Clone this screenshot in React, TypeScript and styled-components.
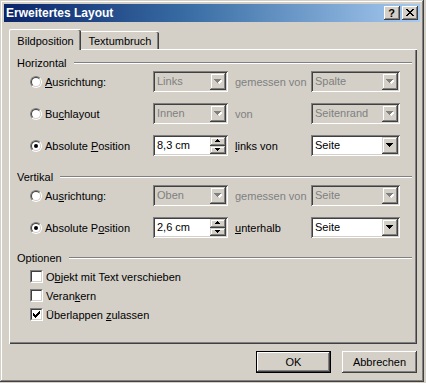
import React from "react";
import styled, { createGlobalStyle } from "styled-components";

const FACE = "#D4D0C8";
const SHADOW = "#808080";
const DARK = "#404040";
const HI = "#FFFFFF";

const GlobalStyle = createGlobalStyle`
  html, body { margin: 0; padding: 0; background: ${FACE}; }
  body {
    font-family: "Liberation Sans", Arial, sans-serif;
    font-size: 11px;
    color: #000;
  }
  * { box-sizing: border-box; }
`;

const Window = styled.div`
  width: 424px;
  height: 382px;
  background: ${FACE};
  padding: 4px;
  box-shadow: inset -1px -1px ${DARK}, inset 1px 1px ${FACE},
    inset -2px -2px ${SHADOW}, inset 2px 2px ${HI};
  display: flex;
  flex-direction: column;
`;

const TitleBar = styled.div`
  height: 18px;
  flex: none;
  display: flex;
  align-items: center;
  justify-content: space-between;
  padding: 0 2px 0 2px;
  background: linear-gradient(to right, #0a246a 0%, #3a6ea5 45%, #a6caf0 100%);
`;

const TitleText = styled.span`
  color: #fff;
  font-weight: bold;
  font-size: 12px;
  line-height: 18px;
`;

const CaptionButtons = styled.div`
  display: flex;
  gap: 2px;
`;

const CaptionButton = styled.div`
  width: 16px;
  height: 14px;
  background: ${FACE};
  box-shadow: inset -1px -1px ${DARK}, inset 1px 1px ${HI},
    inset -2px -2px ${SHADOW};
  display: flex;
  align-items: center;
  justify-content: center;
  font-weight: bold;
  font-size: 11px;
  line-height: 14px;
  padding: 0 1px 1px 0;
`;

const Body = styled.div`
  flex: 1;
  display: flex;
  flex-direction: column;
  padding: 7px 3px 0 5px;
`;

const TabStrip = styled.div`
  display: flex;
  align-items: flex-start;
  height: 20px;
  position: relative;
  z-index: 1;
`;

const Tab = styled.div<{ $active?: boolean }>`
  height: ${(p) => (p.$active ? 21 : 18)}px;
  margin-top: ${(p) => (p.$active ? 0 : 2)}px;
  width: ${(p) => (p.$active ? 72 : 78)}px;
  background: ${FACE};
  border-top: 1px solid ${HI};
  border-left: ${(p) => (p.$active ? `1px solid ${HI}` : "none")};
  border-top-left-radius: ${(p) => (p.$active ? 2 : 0)}px;
  border-top-right-radius: 2px;
  box-shadow: inset -1px 0 ${DARK}, inset -2px 0 ${SHADOW};
  padding-top: ${(p) => (p.$active ? 5 : 3)}px;
  text-align: center;
  line-height: 13px;
`;

const Panel = styled.div`
  width: 408px;
  height: 295px;
  border-top: 1px solid ${HI};
  border-left: 1px solid ${HI};
  box-shadow: inset -1px -1px ${DARK}, inset -2px -2px ${SHADOW};
  padding: 6px 5px 0 7px;
  display: flex;
  flex-direction: column;
`;

const GroupHeader = styled.div<{ $gap?: number }>`
  display: flex;
  align-items: center;
  gap: 7px;
  height: 14px;
  margin-top: ${(p) => p.$gap ?? 0}px;
`;

const GroupLine = styled.div`
  flex: 1;
  height: 2px;
  border-top: 1px solid ${SHADOW};
  border-bottom: 1px solid ${HI};
`;

const Rows = styled.div`
  display: flex;
  flex-direction: column;
  gap: 11px;
  margin-top: 1px;
  padding-left: 13px;
`;

const Row = styled.div`
  display: grid;
  grid-template-columns: 123px 75px 83px 89px;
  height: 21px;
  align-items: center;
`;

const OptionLabel = styled.label`
  display: flex;
  align-items: center;
  gap: 3px;
  white-space: nowrap;
`;

const RadioOuter = styled.span`
  width: 12px;
  height: 12px;
  border-radius: 50%;
  border: 1px solid;
  border-color: ${SHADOW} ${HI} ${HI} ${SHADOW};
  display: flex;
`;

const RadioInner = styled.span`
  flex: 1;
  border-radius: 50%;
  border: 1px solid;
  border-color: ${DARK} ${FACE} ${FACE} ${DARK};
  background: #fff;
  display: flex;
  align-items: center;
  justify-content: center;
`;

const RadioDot = styled.span`
  width: 4px;
  height: 4px;
  border-radius: 50%;
  background: #000;
`;

const Caption = styled.span<{ $disabled?: boolean }>`
  color: ${(p) => (p.$disabled ? SHADOW : "#000")};
  padding-left: 7px;
  white-space: nowrap;
`;

const Mn = styled.span`
  text-decoration: underline;
  text-underline-offset: 1px;
`;

const Field = styled.div<{ $disabled?: boolean }>`
  height: 21px;
  padding: 2px;
  display: flex;
  background: ${(p) => (p.$disabled ? FACE : "#fff")};
  box-shadow: inset 1px 1px ${SHADOW}, inset -1px -1px ${HI},
    inset 2px 2px ${DARK}, inset -2px -2px ${FACE};
`;

const FieldText = styled.span<{ $disabled?: boolean }>`
  flex: 1;
  padding-left: 2px;
  line-height: 17px;
  color: ${(p) => (p.$disabled ? SHADOW : "#000")};
  white-space: nowrap;
  overflow: hidden;
`;

const ArrowButton = styled.span`
  width: 16px;
  height: 17px;
  background: ${FACE};
  box-shadow: inset -1px -1px ${DARK}, inset 1px 1px ${FACE},
    inset -2px -2px ${SHADOW}, inset 2px 2px ${HI};
  display: flex;
  align-items: center;
  justify-content: center;
  padding: 0 1px 1px 0;
`;

const SpinColumn = styled.span`
  width: 16px;
  display: flex;
  flex-direction: column;
`;

const SpinButton = styled.span`
  flex: 1;
  background: ${FACE};
  box-shadow: inset -1px -1px ${DARK}, inset 1px 1px ${FACE},
    inset -2px -2px ${SHADOW}, inset 2px 2px ${HI};
  display: flex;
  align-items: center;
  justify-content: center;
  padding: 0 1px 1px 0;
`;

const Checks = styled.div`
  display: flex;
  flex-direction: column;
  margin-top: 2px;
  padding-left: 13px;
`;

const CheckRow = styled.label`
  display: flex;
  align-items: center;
  gap: 3px;
  height: 19px;
  white-space: nowrap;
`;

const CheckOuter = styled.span`
  width: 13px;
  height: 13px;
  border: 1px solid;
  border-color: ${SHADOW} ${HI} ${HI} ${SHADOW};
  display: flex;
`;

const CheckInner = styled.span`
  flex: 1;
  border: 1px solid;
  border-color: ${DARK} ${FACE} ${FACE} ${DARK};
  background: #fff;
  display: flex;
  align-items: center;
  justify-content: center;
`;

const ButtonRow = styled.div`
  display: flex;
  justify-content: flex-end;
  gap: 11px;
  margin-top: 7px;
  width: 408px;
`;

const PushButton = styled.div<{ $default?: boolean }>`
  width: 75px;
  height: 22px;
  display: flex;
  align-items: center;
  justify-content: center;
  background: ${FACE};
  border: ${(p) => (p.$default ? "1px solid #000" : "none")};
  box-shadow: inset -1px -1px ${DARK}, inset 1px 1px ${HI},
    inset -2px -2px ${SHADOW};
`;

const DownArrow = ({ disabled }: { disabled?: boolean }) => (
  <svg width="8" height="5" viewBox="0 0 8 5" shapeRendering="crispEdges">
    {disabled && <path d="M2 1h7v1h-1v1h-1v1h-1v1h-1v-1h-1v-1h-1v-1h-1z" fill="#fff" />}
    <path d="M0 0h7v1h-1v1h-1v1h-1v1h-1v-1h-1v-1h-1v-1h-1z" fill={disabled ? SHADOW : "#000"} />
  </svg>
);

const SpinArrow = ({ up }: { up?: boolean }) => (
  <svg width="5" height="3" viewBox="0 0 5 3" shapeRendering="crispEdges">
    <path
      d={up ? "M2 0h1v1h1v1h1v1h-5v-1h1v-1h1z" : "M0 0h5v1h-1v1h-1v1h-1v-1h-1v-1h-1z"}
      fill="#000"
    />
  </svg>
);

const Radio = ({ checked }: { checked?: boolean }) => (
  <RadioOuter>
    <RadioInner>{checked && <RadioDot />}</RadioInner>
  </RadioOuter>
);

const Check = ({ checked }: { checked?: boolean }) => (
  <CheckOuter>
    <CheckInner>
      {checked && (
        <svg width="7" height="7" viewBox="0 0 7 7" shapeRendering="crispEdges">
          <path
            d="M6 0h1v3h-1v1h-1v1h-1v1h-1v1h-1v-1h-1v-1h-1v-3h1v1h1v1h1v-1h1v-1h1z"
            fill="#000"
          />
        </svg>
      )}
    </CheckInner>
  </CheckOuter>
);

const Combo = ({ value, disabled }: { value: string; disabled?: boolean }) => (
  <Field $disabled={disabled}>
    <FieldText $disabled={disabled}>{value}</FieldText>
    <ArrowButton>
      <DownArrow disabled={disabled} />
    </ArrowButton>
  </Field>
);

const Spin = ({ value }: { value: string }) => (
  <Field>
    <FieldText>{value}</FieldText>
    <SpinColumn>
      <SpinButton>
        <SpinArrow up />
      </SpinButton>
      <SpinButton>
        <SpinArrow />
      </SpinButton>
    </SpinColumn>
  </Field>
);

export default function App() {
  return (
    <>
      <GlobalStyle />
      <Window>
        <TitleBar>
          <TitleText>Erweitertes Layout</TitleText>
          <CaptionButtons>
            <CaptionButton>?</CaptionButton>
            <CaptionButton>
              <svg width="8" height="7" viewBox="0 0 8 7" shapeRendering="crispEdges">
                <path
                  d="M0 0h2v1h1v1h2v-1h1v-1h2v1h-1v1h-1v1h-1v1h1v1h1v1h1v1h-2v-1h-1v-1h-2v1h-1v1h-2v-1h1v-1h1v-1h1v-1h-1v-1h-1v-1h-1z"
                  fill="#000"
                />
              </svg>
            </CaptionButton>
          </CaptionButtons>
        </TitleBar>
        <Body>
          <TabStrip>
            <Tab $active>Bildposition</Tab>
            <Tab>Textumbruch</Tab>
          </TabStrip>
          <Panel>
            <GroupHeader>
              <span>Horizontal</span>
              <GroupLine />
            </GroupHeader>
            <Rows>
              <Row>
                <OptionLabel>
                  <Radio />
                  <span>
                    <Mn>A</Mn>usrichtung:
                  </span>
                </OptionLabel>
                <Combo value="Links" disabled />
                <Caption $disabled>gemessen von</Caption>
                <Combo value="Spalte" disabled />
              </Row>
              <Row>
                <OptionLabel>
                  <Radio />
                  <span>
                    Bu<Mn>c</Mn>hlayout
                  </span>
                </OptionLabel>
                <Combo value="Innen" disabled />
                <Caption $disabled>von</Caption>
                <Combo value="Seitenrand" disabled />
              </Row>
              <Row>
                <OptionLabel>
                  <Radio checked />
                  <span>
                    Absolute <Mn>P</Mn>osition
                  </span>
                </OptionLabel>
                <Spin value="8,3 cm" />
                <Caption>
                  <Mn>l</Mn>inks von
                </Caption>
                <Combo value="Seite" />
              </Row>
            </Rows>

            <GroupHeader $gap={14}>
              <span>Vertikal</span>
              <GroupLine />
            </GroupHeader>
            <Rows>
              <Row>
                <OptionLabel>
                  <Radio />
                  <span>
                    Au<Mn>s</Mn>richtung:
                  </span>
                </OptionLabel>
                <Combo value="Oben" disabled />
                <Caption $disabled>gemessen von</Caption>
                <Combo value="Seite" disabled />
              </Row>
              <Row>
                <OptionLabel>
                  <Radio checked />
                  <span>
                    Absolute P<Mn>o</Mn>sition
                  </span>
                </OptionLabel>
                <Spin value="2,6 cm" />
                <Caption>
                  <Mn>u</Mn>nterhalb
                </Caption>
                <Combo value="Seite" />
              </Row>
            </Rows>

            <GroupHeader $gap={13}>
              <span>Optionen</span>
              <GroupLine />
            </GroupHeader>
            <Checks>
              <CheckRow>
                <Check />
                <span>
                  O<Mn>b</Mn>jekt mit Text verschieben
                </span>
              </CheckRow>
              <CheckRow>
                <Check />
                <span>
                  Veran<Mn>k</Mn>ern
                </span>
              </CheckRow>
              <CheckRow>
                <Check checked />
                <span>
                  Überlappen <Mn>z</Mn>ulassen
                </span>
              </CheckRow>
            </Checks>
          </Panel>
          <ButtonRow>
            <PushButton $default>OK</PushButton>
            <PushButton>Abbrechen</PushButton>
          </ButtonRow>
        </Body>
      </Window>
    </>
  );
}
